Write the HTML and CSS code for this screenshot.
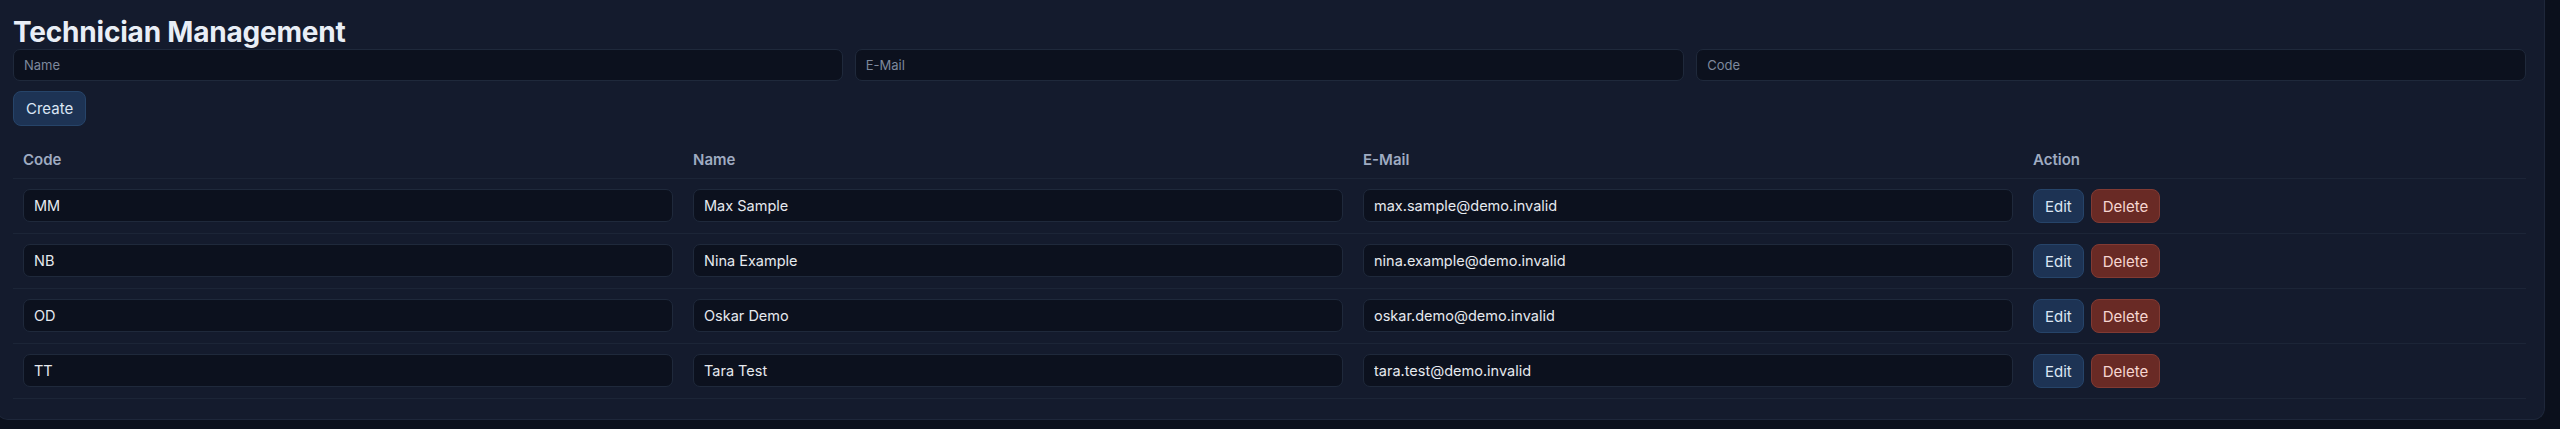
FILE: index.html
```html
<!DOCTYPE html>
<html lang="en">
<head>
<meta charset="utf-8">
<title>Technician Management</title>
<link rel="stylesheet" href="styles.css">
</head>
<body>
<section class="card">
  <h1 class="title">Technician Management</h1>
  <div class="new-row">
    <input class="field" type="text" placeholder="Name">
    <input class="field" type="text" placeholder="E-Mail">
    <input class="field" type="text" placeholder="Code">
  </div>
  <div class="create-row">
    <button class="btn btn-primary" type="button">Create</button>
  </div>
  <table class="grid">
    <colgroup>
      <col class="col-code">
      <col class="col-name">
      <col class="col-mail">
      <col class="col-action">
    </colgroup>
    <thead>
      <tr><th>Code</th><th>Name</th><th>E-Mail</th><th>Action</th></tr>
    </thead>
    <tbody>
      <tr>
        <td><input class="cell-input" type="text" value="MM"></td>
        <td><input class="cell-input" type="text" value="Max Sample"></td>
        <td><input class="cell-input" type="text" value="max.sample@demo.invalid"></td>
        <td><div class="actions"><button class="btn btn-primary" type="button">Edit</button><button class="btn btn-danger" type="button">Delete</button></div></td>
      </tr>
      <tr>
        <td><input class="cell-input" type="text" value="NB"></td>
        <td><input class="cell-input" type="text" value="Nina Example"></td>
        <td><input class="cell-input" type="text" value="nina.example@demo.invalid"></td>
        <td><div class="actions"><button class="btn btn-primary" type="button">Edit</button><button class="btn btn-danger" type="button">Delete</button></div></td>
      </tr>
      <tr>
        <td><input class="cell-input" type="text" value="OD"></td>
        <td><input class="cell-input" type="text" value="Oskar Demo"></td>
        <td><input class="cell-input" type="text" value="oskar.demo@demo.invalid"></td>
        <td><div class="actions"><button class="btn btn-primary" type="button">Edit</button><button class="btn btn-danger" type="button">Delete</button></div></td>
      </tr>
      <tr>
        <td><input class="cell-input" type="text" value="TT"></td>
        <td><input class="cell-input" type="text" value="Tara Test"></td>
        <td><input class="cell-input" type="text" value="tara.test@demo.invalid"></td>
        <td><div class="actions"><button class="btn btn-primary" type="button">Edit</button><button class="btn btn-danger" type="button">Delete</button></div></td>
      </tr>
    </tbody>
  </table>
</section>
</body>
</html>
```

FILE: styles.css
```css
* { box-sizing: border-box; }

html, body {
  margin: 0;
  padding: 0;
  background: #0b101c;
  font-family: Inter, "Liberation Sans", Arial, sans-serif;
  color: #e6e9ef;
}

body { overflow: hidden; }

.card {
  margin: 0 15px 0 -4px;
  padding: 16px 18px 20px 16px;
  background: #141b2d;
  border: 1px solid #1e273a;
  border-top: none;
  border-radius: 0 0 12px 12px;
}

.title {
  margin: -1px 0 0;
  font-size: 28px;
  font-weight: 700;
  line-height: 34px;
  color: #e9eef6;
  letter-spacing: -0.2px;
}

.new-row {
  display: grid;
  grid-template-columns: repeat(3, 1fr);
  gap: 12px;
}

.field, .cell-input {
  display: block;
  width: 100%;
  background: #0c111e;
  border: 1px solid #1f293b;
  border-radius: 7px;
  color: #e6e9ef;
  font-family: inherit;
  outline: none;
}

.field {
  height: 32px;
  padding: 0 10px;
  font-size: 13px;
}

.field::placeholder { color: #7d889c; }

.create-row { margin-top: 10px; }

.btn {
  font-family: inherit;
  font-size: 15px;
  height: 35px;
  padding: 0 12px;
  border-radius: 8px;
  cursor: pointer;
}

.btn-primary {
  background: #1d3354;
  border: 1px solid #264469;
  color: #dbe6f4;
}

.btn-danger {
  background: #692a25;
  border: 1px solid #813a33;
  color: #f7d6d1;
}

.grid {
  width: 100%;
  margin-top: 10px;
  border-collapse: collapse;
  table-layout: fixed;
}

.col-code, .col-name, .col-mail { width: 670px; }
.col-action { width: auto; }

.grid th {
  text-align: left;
  padding: 15px 10px 9px;
  font-size: 15px;
  font-weight: 600;
  line-height: 18px;
  color: #9fabc1;
  border-bottom: 1px solid #1c2537;
}

.grid td {
  padding: 10px 10px 10px;
  border-bottom: 1px solid #1c2537;
  vertical-align: top;
}

.cell-input {
  height: 33px;
  padding: 0 10px;
  font-size: 14.5px;
}

.actions {
  display: flex;
  gap: 7px;
}

.actions .btn { height: 34px; padding: 0 11px; }
```
